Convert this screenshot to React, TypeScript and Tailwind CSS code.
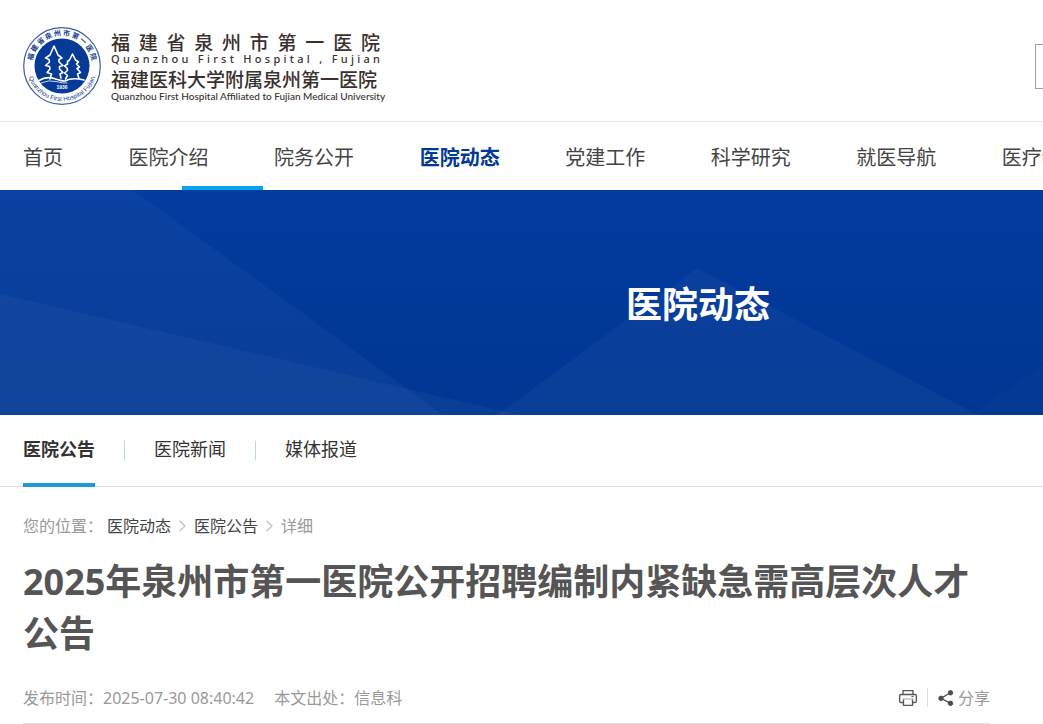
import { Fragment } from 'react';

const navItems = [
  '首页',
  '医院介绍',
  '院务公开',
  '医院动态',
  '党建工作',
  '科学研究',
  '就医导航',
  '医疗特色',
  '人才招聘',
  '联系我们',
];

const tabs = ['医院公告', '医院新闻', '媒体报道'];

function Emblem() {
  return (
    <svg viewBox="0 0 78 80" className="h-20 w-[78px] shrink-0" aria-hidden="true">
      <defs>
        <path id="ring-top" d="M 11.5 50.5 A 30 30 0 1 1 66.5 50.5" />
        <path id="ring-bottom" d="M 4.6 45.5 A 35 35 0 0 0 73.4 45.5" />
      </defs>
      <circle cx="39" cy="39" r="38.3" fill="#fff" stroke="#3c5ca6" strokeWidth="1.2" />
      <circle cx="39" cy="39" r="27.5" fill="#053a96" />
      <text
        fill="#1a3f94"
        fontSize="7"
        fontWeight="700"
        fontFamily="'Noto Sans CJK SC', sans-serif"
      >
        <textPath href="#ring-top" startOffset="50%" textAnchor="middle">
          福 建 省 泉 州 市 第 一 医 院
        </textPath>
      </text>
      <text fill="#1a3f94" fontSize="6.3" fontFamily="'Liberation Sans', sans-serif">
        <textPath href="#ring-bottom" startOffset="50%" textAnchor="middle">
          Quanzhou First Hospital Fujian
        </textPath>
      </text>
      <g fill="none" stroke="#fff" strokeWidth="1.6" strokeLinejoin="round" strokeLinecap="round">
        <path d="M27 52 L28.500 47 L24 45.500 L27 42 L26.500 39.500 L22.500 38.500 L26.500 35 L26 32.500 L22.500 31 L27 28 L31 19 L35 28 L39 31 L36 32.500 L36 35 L40 38.500 L36.500 39.500 L36.500 42 L40 45.500 L37 47 L38 51" />
        <path d="M42.500 52 L44.500 48.500 L41.500 46 L44.500 43.500 L44 41 L41.500 39 L44.500 37 L44.500 34.500 L46.500 33 L49.500 27 L52.500 33 L55.500 35 L53.500 37 L56.500 40 L54 41.500 L57.500 45.500 L54.500 47 L56 51.500" />
        <path d="M15 54 Q24 49 31 51.500 T42 54 Q49 50 61 53" />
        <path d="M18 56 Q26 52.500 33 54.500 T44 56" strokeWidth="0.8" />
      </g>
      <text
        x="39"
        y="62"
        textAnchor="middle"
        fill="#fff"
        fontSize="5"
        fontWeight="700"
        fontFamily="'Liberation Sans', sans-serif"
      >
        1936
      </text>
    </svg>
  );
}

function SpreadText({ text }: { text: string }) {
  return (
    <>
      {text.split('').map((char, i) => (
        <span key={i} className="whitespace-pre">
          {char}
        </span>
      ))}
    </>
  );
}

function Logo() {
  return (
    <a href="#" className="flex items-center gap-[10px] text-[#3a302e]">
      <Emblem />
      <span className="flex w-[269px] flex-col font-['Lato','Noto_Sans_CJK_SC',sans-serif] font-medium">
        <span className="flex justify-between text-[19px] leading-5">
          <SpreadText text="福建省泉州市第一医院" />
        </span>
        <span className="flex justify-between font-['Noto_Sans',sans-serif] text-[11px] leading-3">
          <SpreadText text="Quanzhou First Hospital , Fujian" />
        </span>
        <span className="mt-1 text-[19px] leading-[22px] whitespace-nowrap">
          福建医科大学附属泉州第一医院
        </span>
        <span className="text-[10px] leading-[10px] whitespace-nowrap">
          Quanzhou First Hospital Affiliated to Fujian Medical University
        </span>
      </span>
    </a>
  );
}

function Banner() {
  return (
    <section className="relative flex h-[225px] items-center justify-center bg-linear-to-b from-[#033b9f] to-[#003794]">
      <svg
        viewBox="0 0 1396 225"
        preserveAspectRatio="none"
        className="absolute inset-0 h-full w-full"
        aria-hidden="true"
      >
        <g fill="#fff" fillOpacity="0.035">
          <polygon points="0,0 133,0 443,225 0,225" />
          <polygon points="0,104 520,225 0,225" />
          <polygon points="697,78 978,225 497,225" />
          <polygon points="970,225 1396,-65 1396,225" fillOpacity="0.015" />
        </g>
      </svg>
      <h2 className="relative pt-1 text-4xl font-bold text-white">医院动态</h2>
    </section>
  );
}

function Chevron() {
  return (
    <svg viewBox="0 0 7 12" className="h-3 w-[7px]" fill="none" stroke="#c4c4c4" strokeWidth="1.5">
      <path d="M0.500 0.800 L6 6 L0.500 11.200" />
    </svg>
  );
}

function PrintIcon() {
  return (
    <svg viewBox="0 0 18 16" className="h-4 w-[18px]" fill="none" stroke="#555" strokeWidth="1.3">
      <path d="M4 4.500 V0.700 H14 V4.500" />
      <path d="M4 12.500 H2 Q0.700 12.500 0.700 11.200 V5.800 Q0.700 4.500 2 4.500 H16 Q17.300 4.500 17.300 5.800 V11.200 Q17.300 12.500 16 12.500 H14" />
      <path d="M4.500 9 V15.300 H13.500 V9" />
      <path d="M3.500 9 H14.500" stroke="#bbb" />
      <path d="M12.500 6.500 H14.500" />
    </svg>
  );
}

function ShareIcon() {
  return (
    <svg viewBox="0 0 16 16" className="h-4 w-4" fill="#4d4d4d" stroke="#4d4d4d">
      <path d="M12.500 2.800 L3 8.300 L12.500 13.300" fill="none" strokeWidth="1.300" />
      <circle cx="12.500" cy="2.800" r="2.200" />
      <circle cx="3" cy="8.300" r="2.200" />
      <circle cx="12.500" cy="13.300" r="2.200" />
    </svg>
  );
}

export default function App() {
  return (
    <div className="overflow-hidden bg-white font-['Noto_Sans','Noto_Sans_CJK_SC',sans-serif] text-[#444]">
      <div className="min-w-[1396px]">
        <header>
          <div className="flex h-[122px] items-center justify-between border-b border-[#e3e3e3] px-[23px] pt-3">
            <Logo />
            <input
              type="search"
              aria-label="搜索"
              className="h-[45px] w-[338px] border border-[#96a0ba] px-3 text-base"
            />
          </div>
          <nav className="relative flex h-[68px] items-center justify-between px-[23px] pt-1 text-xl">
            {navItems.map((item) => (
              <a
                key={item}
                href="#"
                className={item === '医院动态' ? 'font-bold text-[#003a96]' : ''}
              >
                {item}
              </a>
            ))}
            <span className="absolute bottom-0 left-[182px] h-1 w-[81px] bg-[#00a7f0]" />
          </nav>
        </header>

        <Banner />

        <div className="flex h-[72px] items-stretch gap-[29px] border-b border-[#e0e0e0] px-[23px] text-lg text-[#333]">
          {tabs.map((tab, i) => (
            <Fragment key={tab}>
              {i > 0 && <span className="my-[26px] w-px bg-[#b8dccd]" />}
              <a
                href="#"
                className={
                  i === 0
                    ? '-mb-px flex items-center border-b-4 border-[#1c9ad8] font-bold'
                    : '-mb-px flex items-center border-b-4 border-transparent'
                }
              >
                {tab}
              </a>
            </Fragment>
          ))}
        </div>

        <main className="ml-[23px] w-[967px] pt-[27px]">
          <div className="flex h-6 items-center gap-2 text-base text-[#999]">
            <span className="-mr-1">您的位置：</span>
            <a href="#" className="text-[#444]">
              医院动态
            </a>
            <Chevron />
            <a href="#" className="text-[#444]">
              医院公告
            </a>
            <Chevron />
            <span>详细</span>
          </div>
          <h1 className="mt-[18px] text-4xl leading-[52px] font-bold text-[#555]">
            2025年泉州市第一医院公开招聘编制内紧缺急需高层次人才公告
          </h1>
          <div className="mt-3 flex h-[52px] items-center justify-between border-b border-[#e0e0e0] text-base text-[#999]">
            <p className="flex gap-5">
              <span>发布时间：2025-07-30 08:40:42</span>
              <span>本文出处：信息科</span>
            </p>
            <div className="flex items-center gap-[10px]">
              <button type="button" aria-label="打印">
                <PrintIcon />
              </button>
              <span className="h-[19px] w-px bg-[#ddd]" />
              <button type="button" className="flex items-center gap-1">
                <ShareIcon />
                分享
              </button>
            </div>
          </div>
        </main>
      </div>
    </div>
  );
}
